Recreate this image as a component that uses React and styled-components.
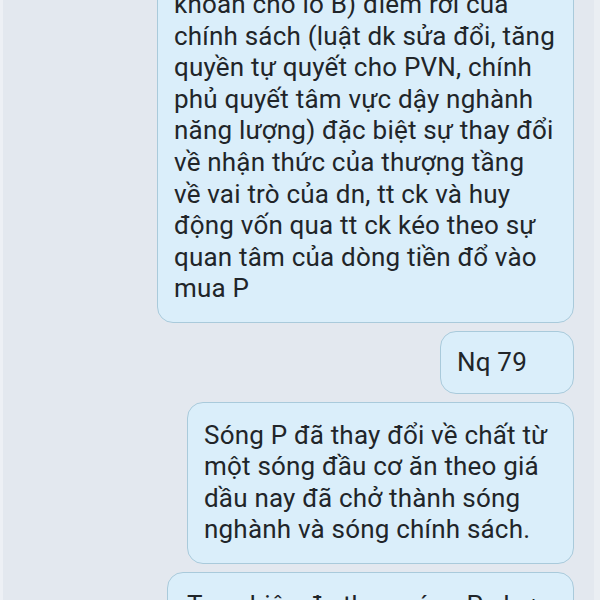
import React from "react";
import styled, { createGlobalStyle } from "styled-components";

const GlobalStyle = createGlobalStyle`
	html, body {
		margin: 0;
		padding: 0;
		background: #e3e8ef;
	}
	body {
		font-family: Roboto, "Noto Sans", "Liberation Sans", sans-serif;
	}
`;

const Screen = styled.div`
	width: 600px;
	height: 600px;
	overflow: hidden;
	box-sizing: border-box;
	background: #e3e8ef;
	border-left: 3px solid #edf0f5;
	border-right: 6px solid #eaeef3;
	display: flex;
	flex-direction: column;
`;

const Thread = styled.div`
	display: flex;
	flex-direction: column;
	align-items: flex-end;
	gap: 8px;
	margin-top: -29px;
	padding-right: 20px;
`;

const Bubble = styled.div`
	box-sizing: border-box;
	width: ${(props) => props.width}px;
	padding: ${(props) => (props.short ? "15px 17px 14px" : "17px")};
	padding-left: ${(props) => props.padX || 16}px;
	background: #daeefa;
	border: 1px solid #a9cadb;
	border-radius: 16px;
	color: #212529;
	font-size: 26px;
	line-height: 31.6px;
	letter-spacing: 0.2px;
	white-space: pre;
	overflow: hidden;
`;

const messages = [
	{
		width: 417,
		text: "khoản cho lô B) điểm rơi của\nchính sách (luật dk sửa đổi, tăng\nquyền tự quyết cho PVN, chính\nphủ quyết tâm vực dậy nghành\nnăng lượng) đặc biệt sự thay đổi\nvề nhận thức của thượng tầng\nvề vai trò của dn, tt ck và huy\nđộng vốn qua tt ck kéo theo sự\nquan tâm của dòng tiền đổ vào\nmua P",
	},
	{ width: 134, short: true, text: "Nq 79" },
	{
		width: 387,
		text: "Sóng P đã thay đổi về chất từ\nmột sóng đầu cơ ăn theo giá\ndầu nay đã chở thành sóng\nnghành và sóng chính sách.",
	},
	{
		width: 407,
		padX: 19,
		text: "Tuy nhiên đu theo sóng P chưa\nhẳn đã dễ",
	},
];

const App = () => {
	return (
		<>
			<GlobalStyle />
			<Screen>
				<Thread>
					{messages.map((m, i) => (
						<Bubble key={i} width={m.width} short={m.short} padX={m.padX}>
							{m.text}
						</Bubble>
					))}
				</Thread>
			</Screen>
		</>
	);
};

export default App;
